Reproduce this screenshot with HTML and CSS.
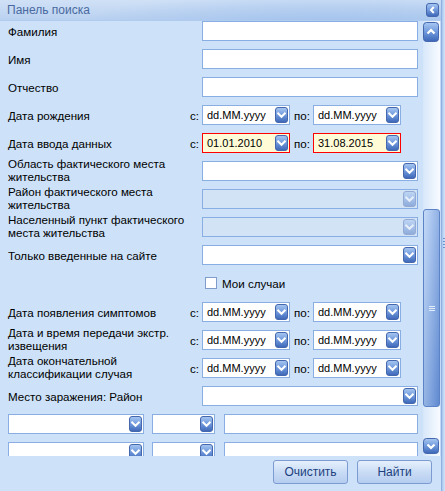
FILE: index.html
```html
<!DOCTYPE html>
<html>
<head>
<meta charset="utf-8">
<link rel="stylesheet" href="styles.css">
</head>
<body>
<svg width="0" height="0" class="defs">
  <defs>
    <linearGradient id="btng" x1="0" y1="0" x2="0" y2="1">
      <stop offset="0" stop-color="#a9c8f2"/>
      <stop offset="0.5" stop-color="#6f98dc"/>
      <stop offset="1" stop-color="#3c66b6"/>
    </linearGradient>
    <symbol id="dd" viewBox="0 0 13 16">
      <rect x="0.5" y="0.5" width="12" height="15" rx="2.5" fill="url(#btng)" stroke="#4467ad"/>
      <path d="M3.2 6.5 L6.5 9.8 L9.8 6.5" fill="none" stroke="#fff" stroke-width="2" stroke-linecap="square"/>
    </symbol>
  </defs>
</svg>
<div class="panel">
  <div class="inner">
    <div class="header">
      <span class="title">Панель поиска</span>
      <span class="collapse"><svg width="13" height="14" viewBox="0 0 13 14"><rect x="0.5" y="0.5" width="12" height="13" rx="2.5" fill="url(#btng)" stroke="#4467ad"/><path d="M7.8 4 L5 7 L7.8 10" fill="none" stroke="#fff" stroke-width="2"/></svg></span>
    </div>
    <div class="main">
      <div class="scroll">
        <div class="row"><div class="label">Фамилия</div><div class="ctl"><div class="field wide"></div></div></div>
        <div class="row"><div class="label">Имя</div><div class="ctl"><div class="field wide"></div></div></div>
        <div class="row"><div class="label">Отчество</div><div class="ctl"><div class="field wide"></div></div></div>
        <div class="row"><div class="label">Дата рождения</div><div class="ctl date">
          <span class="pfx">c:</span><div class="field dt"><span class="val">dd.MM.yyyy</span><svg class="ddb"><use href="#dd"/></svg></div>
          <span class="po">по:</span><div class="field dt"><span class="val">dd.MM.yyyy</span><svg class="ddb"><use href="#dd"/></svg></div>
        </div></div>
        <div class="row"><div class="label">Дата ввода данных</div><div class="ctl date">
          <span class="pfx">c:</span><div class="field dt err"><span class="val">01.01.2010</span><svg class="ddb"><use href="#dd"/></svg></div>
          <span class="po">по:</span><div class="field dt err"><span class="val">31.08.2015</span><svg class="ddb"><use href="#dd"/></svg></div>
        </div></div>
        <div class="row"><div class="label two">Область фактического места жительства</div><div class="ctl"><div class="field wide"><svg class="ddb"><use href="#dd"/></svg></div></div></div>
        <div class="row"><div class="label two">Район фактического места жительства</div><div class="ctl"><div class="field wide dis"><svg class="ddb"><use href="#dd"/></svg></div></div></div>
        <div class="row"><div class="label two">Населенный пункт фактического места жительства</div><div class="ctl"><div class="field wide dis"><svg class="ddb"><use href="#dd"/></svg></div></div></div>
        <div class="row"><div class="label">Только введенные на сайте</div><div class="ctl"><div class="field wide"><svg class="ddb"><use href="#dd"/></svg></div></div></div>
        <div class="row chk-row"><div class="label"></div><div class="ctl"><span class="chk"></span><span class="chk-label">Мои случаи</span></div></div>
        <div class="row"><div class="label">Дата появления симптомов</div><div class="ctl date">
          <span class="pfx">c:</span><div class="field dt"><span class="val">dd.MM.yyyy</span><svg class="ddb"><use href="#dd"/></svg></div>
          <span class="po">по:</span><div class="field dt"><span class="val">dd.MM.yyyy</span><svg class="ddb"><use href="#dd"/></svg></div>
        </div></div>
        <div class="row"><div class="label two">Дата и время передачи экстр. извещения</div><div class="ctl date">
          <span class="pfx">c:</span><div class="field dt"><span class="val">dd.MM.yyyy</span><svg class="ddb"><use href="#dd"/></svg></div>
          <span class="po">по:</span><div class="field dt"><span class="val">dd.MM.yyyy</span><svg class="ddb"><use href="#dd"/></svg></div>
        </div></div>
        <div class="row"><div class="label two">Дата окончательной классификации случая</div><div class="ctl date">
          <span class="pfx">c:</span><div class="field dt"><span class="val">dd.MM.yyyy</span><svg class="ddb"><use href="#dd"/></svg></div>
          <span class="po">по:</span><div class="field dt"><span class="val">dd.MM.yyyy</span><svg class="ddb"><use href="#dd"/></svg></div>
        </div></div>
        <div class="row"><div class="label">Место заражения: Район</div><div class="ctl"><div class="field wide"><svg class="ddb"><use href="#dd"/></svg></div></div></div>
        <div class="row three first">
          <div class="field s1"><svg class="ddb"><use href="#dd"/></svg></div>
          <div class="field s2"><svg class="ddb"><use href="#dd"/></svg></div>
          <div class="field s3"></div>
        </div>
        <div class="row three">
          <div class="field s1"><svg class="ddb"><use href="#dd"/></svg></div>
          <div class="field s2"><svg class="ddb"><use href="#dd"/></svg></div>
          <div class="field s3"></div>
        </div>
      </div>
      <div class="vscroll">
        <div class="sbtn"><svg width="16" height="20" viewBox="0 0 16 20"><rect x="0.5" y="0.5" width="15" height="19" rx="3" fill="url(#btng)" stroke="#4467ad"/><path d="M4.5 11.5 L8 8 L11.5 11.5" fill="none" stroke="#fff" stroke-width="2.2"/></svg></div>
        <div class="track">
          <div class="thumb"><span class="grip"></span></div>
        </div>
        <div class="sbtn"><svg width="16" height="16" viewBox="0 0 16 16"><rect x="0.5" y="0.5" width="15" height="15" rx="3" fill="url(#btng)" stroke="#4467ad"/><path d="M4.5 6.5 L8 10 L11.5 6.5" fill="none" stroke="#fff" stroke-width="2.2"/></svg></div>
      </div>
    </div>
    <div class="footer">
      <button class="btn">Очистить</button>
      <button class="btn">Найти</button>
    </div>
  </div>
  <div class="strip"><span class="sgrip"></span></div>
</div>
</body>
</html>
```
FILE: styles.css
```css
* { box-sizing: border-box; }
html, body { margin: 0; padding: 0; }
body {
  width: 445px;
  height: 491px;
  overflow: hidden;
  font-family: "Liberation Sans", Arial, sans-serif;
  font-size: 11.6px;
  color: #000;
  background: #cde2f9;
}
.defs { position: absolute; }
.panel {
  display: flex;
  width: 445px;
  height: 491px;
}
.inner {
  width: 441px;
  display: flex;
  flex-direction: column;
}
.strip {
  width: 4px;
  background: linear-gradient(to right, #a9c6ee, #d4e5fa);
  border-left: 1px solid #8fb0e0;
  position: relative;
}
.sgrip {
  position: absolute;
  left: 1px;
  top: 238px;
  width: 2px;
  height: 12px;
  background: repeating-linear-gradient(to bottom, #6f93cf 0 1px, transparent 1px 3px);
}
.header {
  height: 21px;
  display: flex;
  align-items: center;
  justify-content: space-between;
  padding: 0 2px 0 7px;
  background:
    radial-gradient(ellipse 260px 40px at 330px 30px, rgba(150,186,235,0.75), rgba(150,186,235,0) 100%),
    linear-gradient(to bottom, #d0e1f6, #b9d1f0);
  border-bottom: 1px solid #b0cbee;
}
.title {
  color: #4a6a9f;
  font-size: 12px;
}
.collapse { display: flex; width: 13px; height: 14px; }
.main {
  display: flex;
  height: 435px;
}
.scroll {
  width: 423px;
  height: 435px;
  overflow: hidden;
  padding: 0 5px 0 8px;
}
.row {
  display: flex;
  align-items: center;
  height: 20px;
  margin-bottom: 8px;
}
.label {
  width: 182px;
  flex: none;
  line-height: 13px;
  padding-right: 4px;
}
.label.two { margin-top: -3px; }
.ctl {
  display: flex;
  align-items: center;
}
.field {
  height: 20px;
  background: #fff;
  border: 1px solid #89aee4;
  display: flex;
  align-items: center;
  justify-content: space-between;
  padding: 0 1px 0 4px;
  flex: none;
}
.wide { width: 216px; margin-left: 12px; }
.dis { background: #d3e3f6; }
.dis .ddb { opacity: 0.45; }
.date .pfx { width: 12px; }
.date .po { width: 23px; padding-left: 4px; }
.dt { width: 88px; }
.err { border-color: #f00; background: #fffbd6; }
.val { white-space: nowrap; font-size: 11px; }
.ddb { width: 13px; height: 16px; flex: none; margin-left: auto; }
.chk-row { margin-bottom: 9px; }
.chk-row .ctl { padding-left: 15px; }
.chk {
  width: 12px;
  height: 12px;
  background: #fff;
  border: 1px solid #7f9ccb;
  margin-right: 5px;
}
.three.first { margin-top: 3px; }
.s1 { width: 136px; margin-right: 8px; }
.s2 { width: 63px; margin-right: 9px; }
.s3 { width: 194px; }
.vscroll {
  width: 18px;
  display: flex;
  flex-direction: column;
  background: linear-gradient(to right, #d7e7fa, #f8fbff);
  border-right: 1px solid #c5daf4;
}
.sbtn { display: flex; padding-top: 1px; }
.sbtn:last-child { padding-bottom: 2px; padding-top: 0; }
.track {
  flex: 1;
  position: relative;
}
.thumb {
  position: absolute;
  left: 0;
  top: 167px;
  width: 17px;
  height: 198px;
  border: 1px solid #5b83c6;
  border-radius: 3px;
  background:
    linear-gradient(to bottom, rgba(255,255,255,0.25), rgba(40,80,160,0.2)),
    linear-gradient(to right, #b0cdf4, #8fb3ea 50%, #6e98dc);
  display: flex;
  align-items: center;
  justify-content: center;
}
.grip {
  width: 6px;
  height: 5px;
  background: repeating-linear-gradient(to bottom, #e2ecfa 0 1px, transparent 1px 2px);
}
.footer {
  height: 35px;
  display: flex;
  justify-content: flex-end;
  align-items: flex-start;
  padding: 4px 9px 0 0;
  gap: 9px;
}
.btn {
  width: 75px;
  height: 24px;
  font-family: "Liberation Sans", Arial, sans-serif;
  font-size: 12px;
  color: #1d3f7e;
  border: 1px solid #7b9bd2;
  border-radius: 3px;
  background: linear-gradient(to bottom, #e6f0fc, #c9dcf5 50%, #b6cdef);
  padding: 0;
}
```
